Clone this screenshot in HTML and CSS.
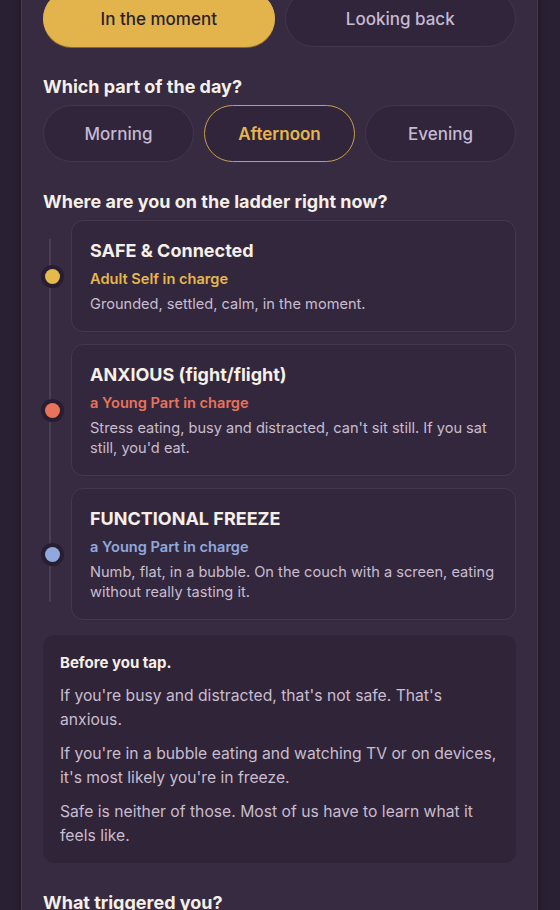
FILE: index.html
```html
<!DOCTYPE html>
<html lang="en">
<head>
<meta charset="utf-8">
<title>Check-in</title>
<link rel="stylesheet" href="styles.css">
</head>
<body>
<div class="page">
  <main class="panel">
    <div class="toggle">
      <button class="pill pill-solid">In the moment</button>
      <button class="pill">Looking back</button>
    </div>

    <section class="section">
      <h2 class="heading">Which part of the day?</h2>
      <div class="triple">
        <button class="pill">Morning</button>
        <button class="pill pill-outline">Afternoon</button>
        <button class="pill">Evening</button>
      </div>
    </section>

    <section class="section">
      <h2 class="heading">Where are you on the ladder right now?</h2>
      <div class="ladder">
        <div class="rung">
          <span class="dot dot-safe"></span>
          <div class="card">
            <h3 class="card-title">SAFE &amp; Connected</h3>
            <p class="card-sub sub-safe">Adult Self in charge</p>
            <p class="card-desc">Grounded, settled, calm, in the moment.</p>
          </div>
        </div>
        <div class="rung">
          <span class="dot dot-anx"></span>
          <div class="card">
            <h3 class="card-title">ANXIOUS (fight/flight)</h3>
            <p class="card-sub sub-anx">a Young Part in charge</p>
            <p class="card-desc">Stress eating, busy and distracted, can't sit still. If you sat still, you'd eat.</p>
          </div>
        </div>
        <div class="rung">
          <span class="dot dot-frz"></span>
          <div class="card">
            <h3 class="card-title">FUNCTIONAL FREEZE</h3>
            <p class="card-sub sub-frz">a Young Part in charge</p>
            <p class="card-desc">Numb, flat, in a bubble. On the couch with a screen, eating without really tasting it.</p>
          </div>
        </div>
      </div>

      <div class="note">
        <p class="note-title">Before you tap.</p>
        <p class="note-text">If you're busy and distracted, that's not safe. That's anxious.</p>
        <p class="note-text">If you're in a bubble eating and watching TV or on devices, it's most likely you're in freeze.</p>
        <p class="note-text">Safe is neither of those. Most of us have to learn what it feels like.</p>
      </div>
    </section>

    <section class="section">
      <h2 class="heading">What triggered you?</h2>
    </section>
  </main>
</div>
</body>
</html>
```

FILE: styles.css
```css
* { box-sizing: border-box; }

html, body {
  margin: 0;
  padding: 0;
  background: #2a2033;
  font-family: Inter, "Noto Sans", "Liberation Sans", sans-serif;
  color: #f4eee6;
}

.page {
  padding: 0 22px 0 21px;
  overflow: hidden;
  height: 910px;
}

.panel {
  margin-top: -40px;
  background: #372b41;
  border: 1px solid #45394f;
  border-top: none;
  padding: 30px 21px 40px;
  box-shadow: 0 0 8px rgba(15, 8, 20, 0.45);
  min-height: 1000px;
}

.toggle {
  display: grid;
  grid-template-columns: 1fr 1fr;
  gap: 10px;
}

.pill {
  height: 57px;
  border-radius: 29px;
  border: 1px solid #43374e;
  background: #30253a;
  color: #c6bad3;
  font-family: inherit;
  font-size: 17px;
  font-weight: 500;
  padding: 0;
}

.pill-solid {
  background: #e4b44c;
  border-color: #e4b44c;
  color: #2a1f2c;
  box-shadow: 0 1px 0 #8a6a2a;
}

.pill-outline {
  border-color: #c79f4b;
  color: #e7b550;
  font-weight: 600;
}

.section { margin-top: 29px; }

.heading {
  margin: 0 0 7px;
  font-size: 18px;
  line-height: 22px;
  font-weight: 700;
  color: #f5efe7;
}

.triple {
  display: grid;
  grid-template-columns: 1fr 1fr 1fr;
  gap: 10px;
}

.ladder {
  position: relative;
  display: flex;
  flex-direction: column;
  gap: 12px;
  padding-left: 28px;
}

.ladder::before {
  content: "";
  position: absolute;
  left: 6px;
  top: 19px;
  bottom: 18px;
  width: 2px;
  background: #4a3d56;
}

.rung {
  position: relative;
}

.dot {
  position: absolute;
  left: -26px;
  top: 50%;
  width: 15px;
  height: 15px;
  margin-top: -7px;
  border-radius: 50%;
  box-shadow: 0 0 0 4px #281d31;
}

.dot-safe { background: #e5b94c; }
.dot-anx { background: #e8735b; }
.dot-frz { background: #8fa9de; }

.card {
  background: #33273d;
  border: 1px solid #44384f;
  border-radius: 12px;
  padding: 19px 18px 17px;
}

.card-title {
  margin: 0;
  font-size: 18px;
  line-height: 22px;
  font-weight: 700;
  color: #f5efe7;
}

.card-sub {
  margin: 7px 0 0;
  font-size: 14.6px;
  line-height: 20px;
  font-weight: 600;
}

.sub-safe { color: #e5b74c; }
.sub-anx { color: #e8735b; }
.sub-frz { color: #8fa9de; }

.card-desc {
  margin: 5px 0 0;
  font-size: 14.6px;
  line-height: 20px;
  color: #c9bdcf;
}

.note {
  margin-top: 15px;
  background: #2f2438;
  border-radius: 12px;
  padding: 17px 14px 15px 17px;
}

.note-title {
  margin: 0;
  font-size: 15px;
  line-height: 22px;
  font-weight: 700;
  color: #f5efe7;
}

.note-text {
  margin: 10px 0 0;
  font-size: 15.7px;
  line-height: 24px;
  color: #c9bdcf;
}
```
